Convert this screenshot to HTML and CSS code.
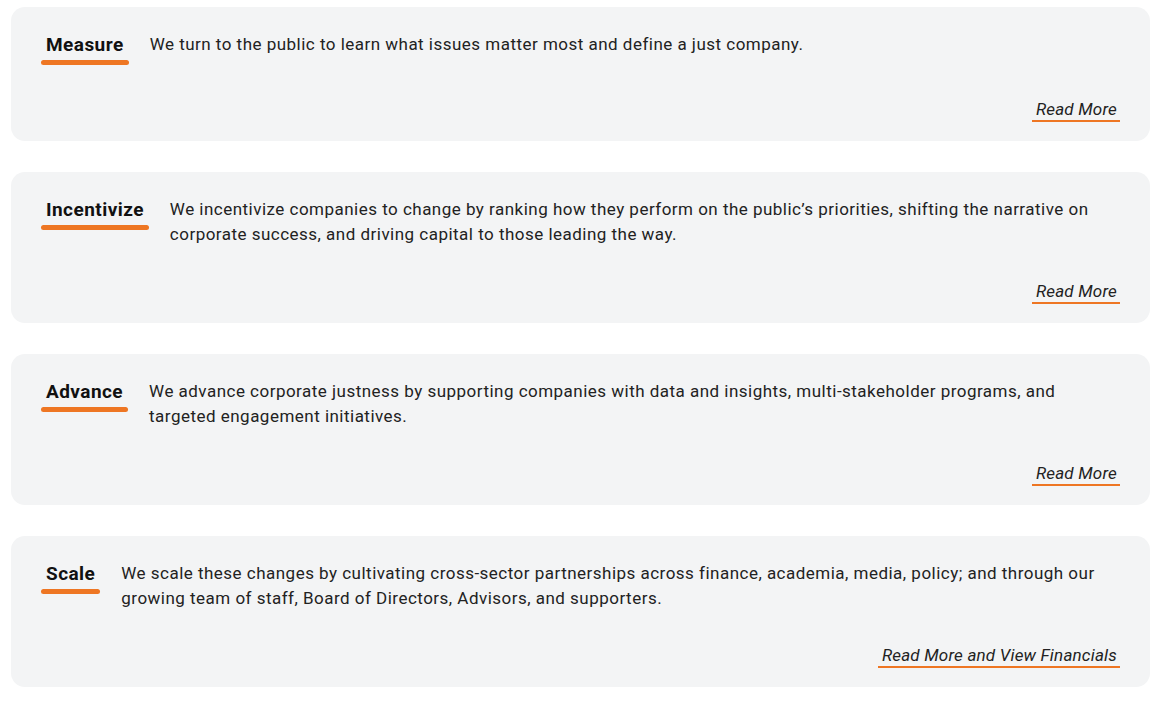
FILE: index.html
```html
<!DOCTYPE html>
<html lang="en">
<head>
<meta charset="utf-8">
<title>Our Approach</title>
<link rel="stylesheet" href="styles.css">
</head>
<body>
<main class="list">
  <section class="card">
    <div class="row">
      <h3 class="title">Measure</h3>
      <p class="desc">We turn to the public to learn what issues matter most and define a just company.</p>
    </div>
    <div class="more"><a class="link" href="#">Read More</a></div>
  </section>
  <section class="card">
    <div class="row">
      <h3 class="title">Incentivize</h3>
      <p class="desc">We incentivize companies to change by ranking how they perform on the public’s priorities, shifting the narrative on corporate success, and driving capital to those leading the way.</p>
    </div>
    <div class="more"><a class="link" href="#">Read More</a></div>
  </section>
  <section class="card">
    <div class="row">
      <h3 class="title">Advance</h3>
      <p class="desc">We advance corporate justness by supporting companies with data and insights, multi-stakeholder programs, and targeted engagement initiatives.</p>
    </div>
    <div class="more"><a class="link" href="#">Read More</a></div>
  </section>
  <section class="card">
    <div class="row">
      <h3 class="title">Scale</h3>
      <p class="desc">We scale these changes by cultivating cross-sector partnerships across finance, academia, media, policy; and through our growing team of staff, Board of Directors, Advisors, and supporters.</p>
    </div>
    <div class="more"><a class="link" href="#">Read More and View Financials</a></div>
  </section>
</main>
</body>
</html>
```

FILE: styles.css
```css
* { box-sizing: border-box; }
html, body { margin: 0; padding: 0; background: #ffffff; }
body {
  font-family: Roboto, "Liberation Sans", sans-serif;
  color: #222222;
  padding: 7px 15px 10px 11px;
}
.list {
  display: flex;
  flex-direction: column;
  gap: 31px;
}
.card {
  background: #f3f4f5;
  border-radius: 14px;
  padding: 25px 30px 19px 30px;
}
.row {
  display: flex;
  align-items: flex-start;
  gap: 21px;
}
.title {
  margin: 0;
  flex: none;
  font-size: 19px;
  line-height: 25px;
  font-weight: 700;
  color: #111111;
  padding: 0 5px;
  letter-spacing: 0.45px;
}
.title::after {
  content: "";
  display: block;
  height: 5px;
  margin: 3px -5px 0;
  border-radius: 3px;
  background: #ee7623;
}
.desc {
  margin: 0;
  font-size: 17px;
  line-height: 25px;
  letter-spacing: 0.48px;
  color: #222222;
}
.more {
  margin-top: 33px;
  display: flex;
  justify-content: flex-end;
}
.link {
  display: inline-block;
  font-size: 17px;
  line-height: 22px;
  font-style: italic;
  letter-spacing: 0.2px;
  color: #222222;
  text-decoration: none;
  padding: 0 3px 0 4px;
  border-bottom: 2px solid #ee7623;
}
```
